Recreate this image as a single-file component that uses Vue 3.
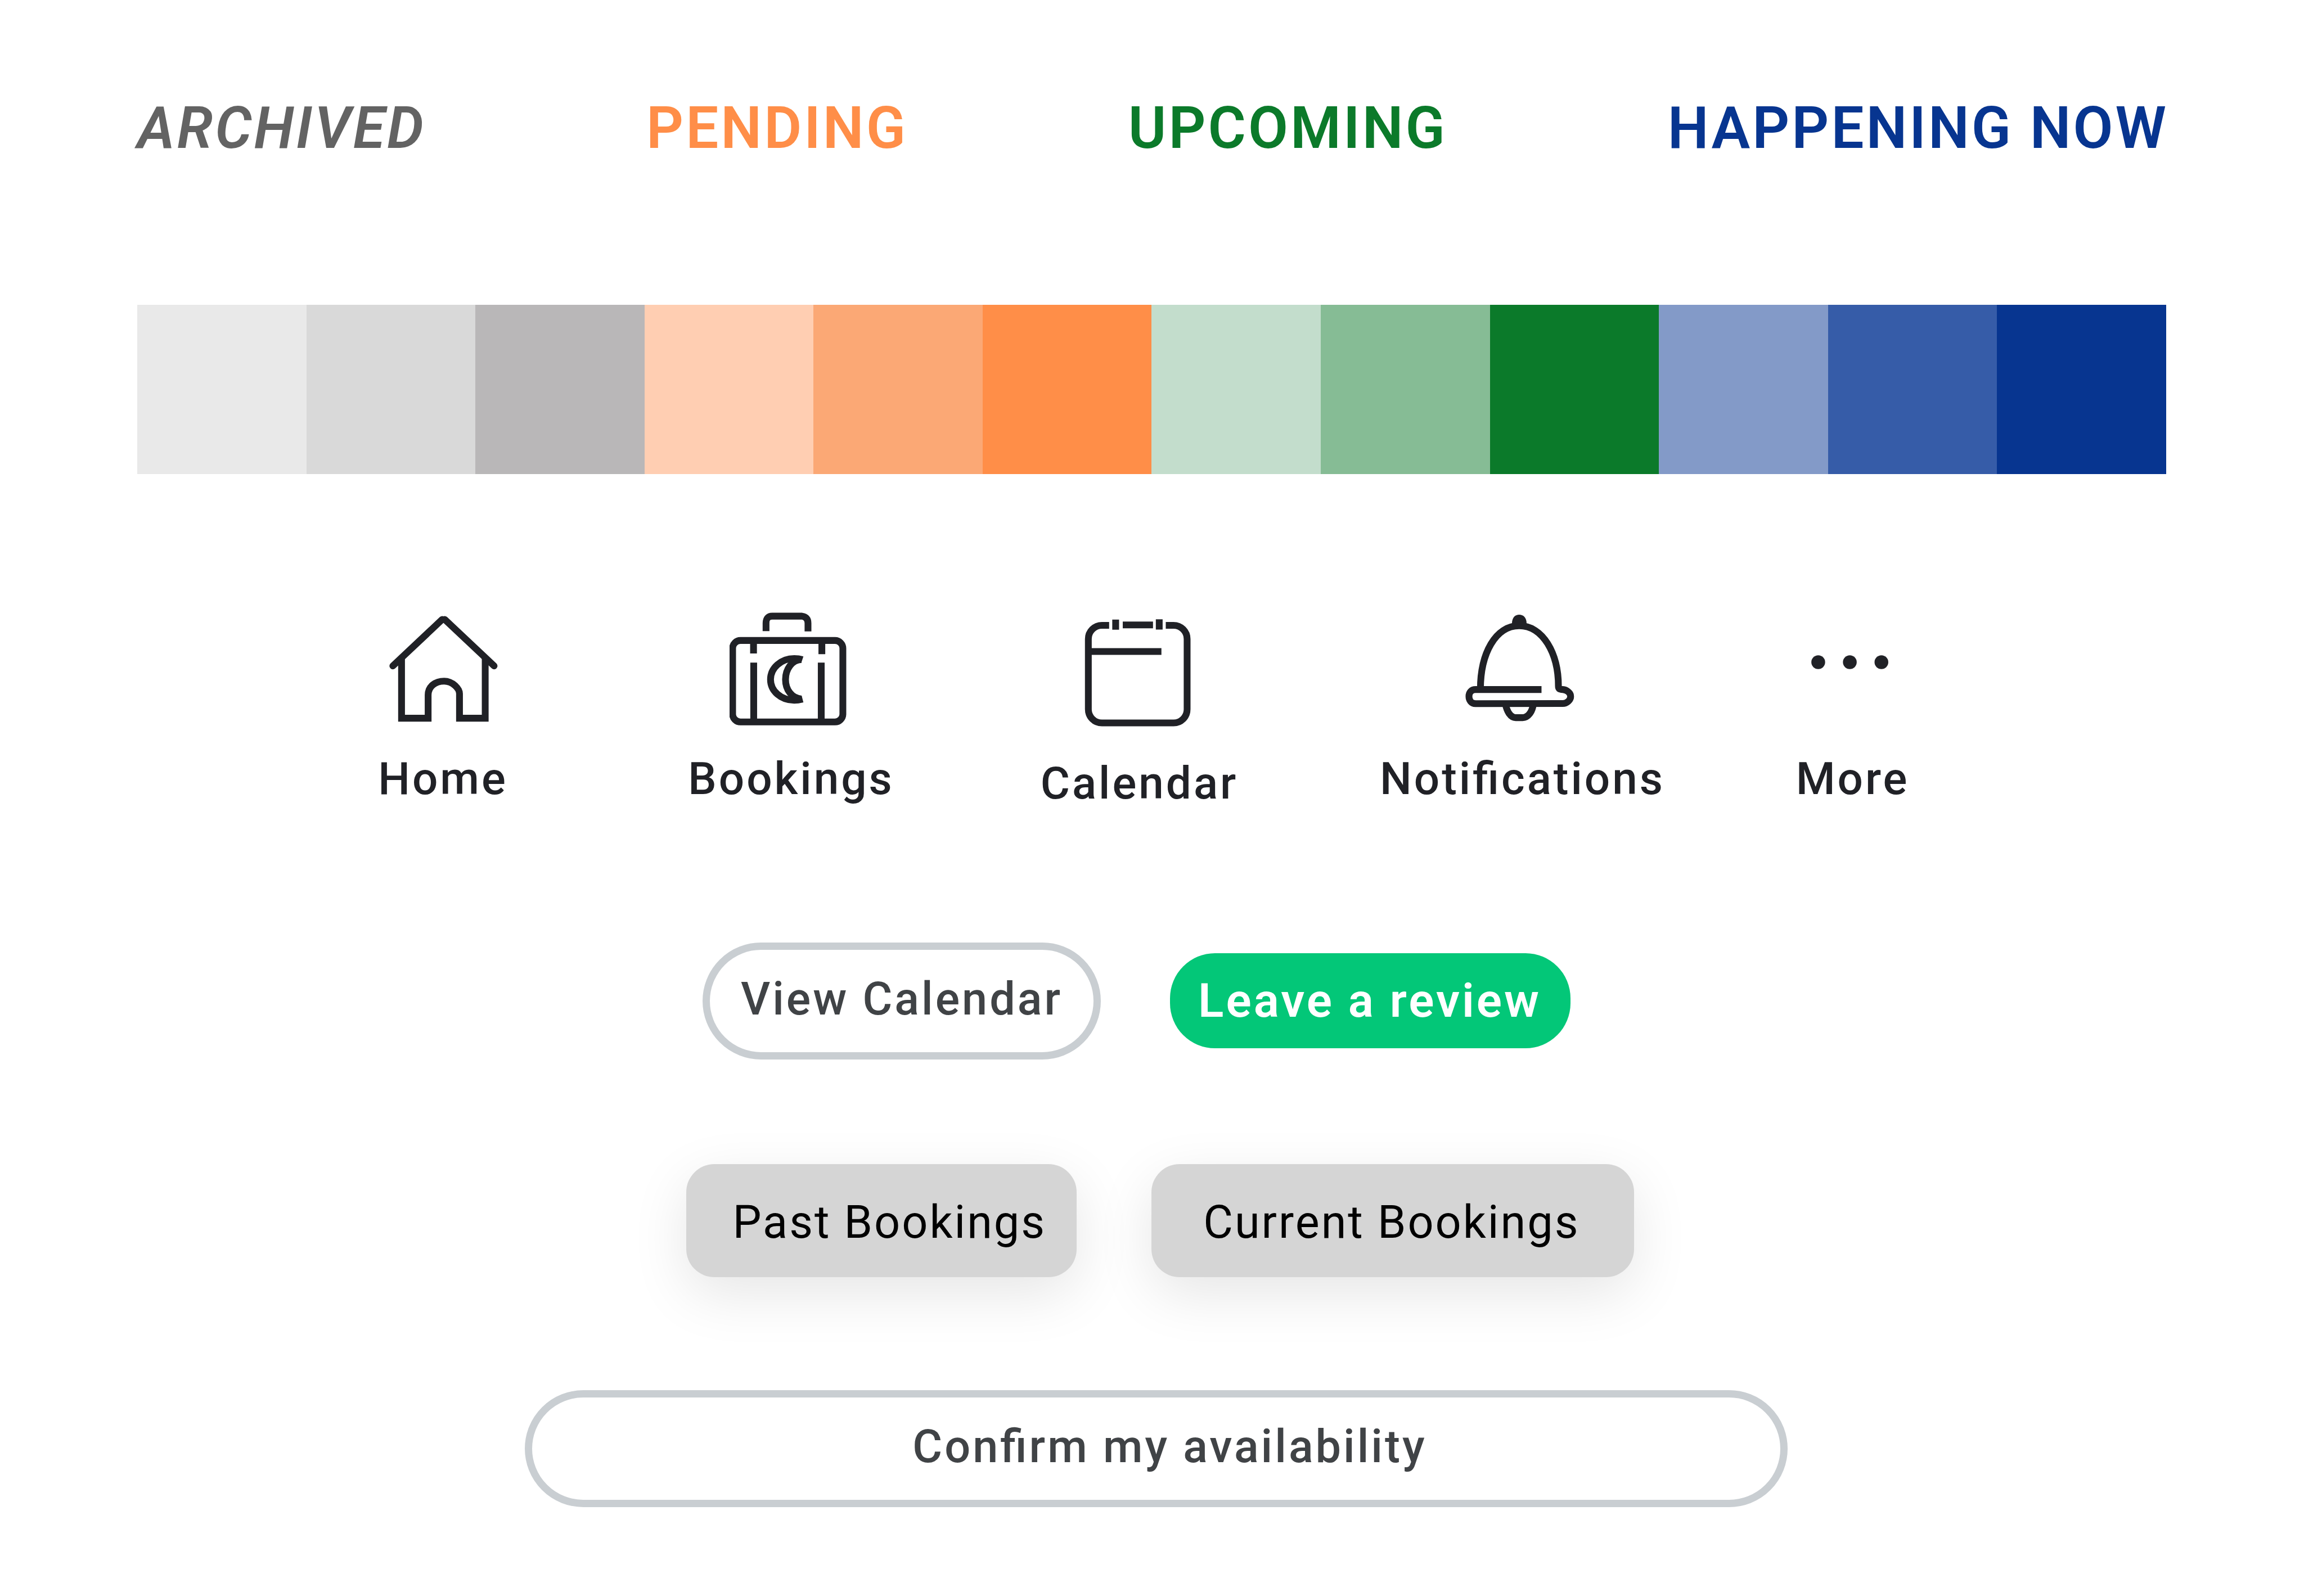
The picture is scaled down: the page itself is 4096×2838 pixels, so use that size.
<script setup>
const statuses = [
  { label: 'Archived', tone: 'archived' },
  { label: 'Pending', tone: 'pending' },
  { label: 'Upcoming', tone: 'upcoming' },
  { label: 'Happening now', tone: 'now' },
]

const swatches = [
  '#e9e9e9', '#d9d9d9', '#b9b7b8',
  '#ffceb2', '#fba875', '#ff8e48',
  '#c3ddcc', '#86bc95', '#0b7a2a',
  '#839ac8', '#365ca8', '#073590',
]
</script>

<template>
  <main class="page">
    <ul class="legend">
      <li v-for="s in statuses" :key="s.tone" :class="['status', s.tone]">{{ s.label }}</li>
    </ul>

    <div class="palette" aria-hidden="true">
      <span v-for="c in swatches" :key="c" class="swatch" :style="{ background: c }"></span>
    </div>

    <nav class="nav">
      <a class="nav-item" href="#home">
        <svg class="icon" viewBox="0 0 284 284" aria-hidden="true">
          <path stroke-linecap="round" d="M26.3 129.3 139.7 22.5M145.3 22.5 258.7 129.3" />
          <path d="M46.3 112V249.3H107.3V196C107.3 176 124 164.2 144 164.2S179.3 182 179.3 193V249.3H238.3V112" />
        </svg>
        <span>Home</span>
      </a>
      <a class="nav-item" href="#bookings">
        <svg class="icon" viewBox="1 0 284 284" aria-hidden="true">
          <rect x="8" y="70.8" width="253" height="187" rx="18" />
          <path d="M84.7 49.4V31Q84.7 15 99 15H167Q181 17 181 31V50" />
          <path d="M56 71V100.7M56.4 121.7V258M212.8 71V102.3M211.4 121.7V258" />
          <path d="M168 115C162 113 156 112.3 149.4 112.3C119 112.3 95 134 95 160.3C95 187 119 208 149.4 208C156 208 162 207 168.5 205.3" />
          <path d="M166 114.5C144 115 129.4 137 129.4 160.3C129.4 184 144 204 166 205.3" />
        </svg>
        <span>Bookings</span>
      </a>
      <a class="nav-item" href="#calendar">
        <svg class="icon icon-tall" viewBox="3 0 284 294" aria-hidden="true">
          <path d="M75 36H58.5A31.2 31.2 0 0 0 27.3 67.2V228.8A31.2 31.2 0 0 0 58.5 260H222.8A31.2 31.2 0 0 0 254 228.8V67.2A31.2 31.2 0 0 0 222.8 36H205" />
          <path d="M90 22.7V46M106.3 35H175.7M190 22.2V45.7M27 96H195" />
        </svg>
        <span>Calendar</span>
      </a>
      <a class="nav-item" href="#notifications">
        <svg class="icon" viewBox="0 0 284 284" aria-hidden="true">
          <path class="solid" d="M117.4 32C117.4 18 125 11.7 134 11.7S151 18 151 32L148 41Q134 47 120 41Z" />
          <path d="M45 183C45 100 80 37 134 37C188 37 224 100 224 176C224 182 227 183.5 234 183.5C243 184 252 191 252 199.5C252 208 243 215.5 234 215.5L34 216C24 215.7 18.7 208 18.7 199C18.7 190 24 183.5 34 183.5H185.2" />
          <path d="M102.5 217C106 234 114 248 126 248H142C154 248 164 235 166.4 217" />
        </svg>
        <span>Notifications</span>
      </a>
      <a class="nav-item" href="#more">
        <svg class="icon" viewBox="0 0 284 284" aria-hidden="true">
          <circle class="solid" cx="62.5" cy="120.7" r="15.8" />
          <circle class="solid" cx="135" cy="120.7" r="15.8" />
          <circle class="solid" cx="207.5" cy="120.7" r="15.8" />
        </svg>
        <span>More</span>
      </a>
    </nav>

    <div class="actions">
      <button type="button" class="btn outline">View Calendar</button>
      <button type="button" class="btn primary">Leave a review</button>
    </div>

    <div class="filters">
      <button type="button" class="btn tab past">Past Bookings</button>
      <button type="button" class="btn tab">Current Bookings</button>
    </div>

    <div class="confirm">
      <button type="button" class="btn outline wide">Confirm my availability</button>
    </div>
  </main>
</template>

<style>
body {
  background: #fff;
}
</style>

<style scoped>
.page {
  box-sizing: border-box;
  padding: 168px 245px 158px 244px;
  font-family: Roboto, "Liberation Sans", sans-serif;
  font-size: 80px;
  font-feature-settings: "liga" 1;
}

.legend {
  display: flex;
  justify-content: space-between;
  margin: 0 -4px 0 0;
  padding: 0;
  list-style: none;
}

.status {
  font-size: 103px;
  line-height: 120px;
  font-weight: 600;
  letter-spacing: 4px;
  text-transform: uppercase;
  white-space: nowrap;
}

.archived {
  color: #636363;
  font-style: italic;
}

.pending {
  color: #ff8e48;
}

.upcoming {
  color: #0b7a2a;
}

.now {
  color: #073590;
}

.palette {
  display: flex;
  margin-top: 254px;
}

.swatch {
  flex: 1;
  aspect-ratio: 1;
}

.nav {
  display: grid;
  grid-template-columns: 619fr 619fr 619fr 743fr 431fr;
  align-items: start;
  margin: 241px 342px 0 234px;
}

.nav-item {
  display: flex;
  flex-direction: column;
  align-items: center;
  gap: 34px;
  color: #202126;
  line-height: 94px;
  font-weight: 500;
  letter-spacing: 4px;
  text-decoration: none;
}

.icon {
  width: 220px;
  height: 220px;
  fill: none;
  stroke: currentColor;
  stroke-width: 15.6;
}

.icon-tall {
  height: 228px;
}

.solid {
  fill: currentColor;
  stroke: none;
}

.actions,
.filters {
  display: flex;
  justify-content: center;
  align-items: center;
}

.actions {
  gap: 123px;
  margin-top: 236px;
  padding-right: 54px;
}

.filters {
  gap: 133px;
  margin-top: 186px;
  padding-left: 30px;
}

.confirm {
  margin: 201px 673px 0 689px;
}

.btn {
  box-sizing: border-box;
  margin: 0;
  border: 0;
  font: inherit;
  font-size: 81px;
  font-feature-settings: inherit;
  line-height: 96px;
  letter-spacing: 4px;
  white-space: nowrap;
  cursor: pointer;
}

.outline {
  height: 208px;
  padding: 0 55px 6px;
  border: 13px solid #c9ced2;
  border-radius: 104px;
  background: #fff;
  color: #404346;
  font-weight: 500;
}

.wide {
  width: 100%;
  padding-left: 103px;
}

.primary {
  height: 169px;
  padding: 0 52px 0 50px;
  border-radius: 80px;
  background: #03c778;
  color: #fff;
  font-size: 84px;
  font-weight: 600;
}

.tab {
  height: 201px;
  padding: 8px 96px 0 92px;
  border-radius: 50px;
  background: #d5d5d5;
  box-shadow: 0 30px 100px rgba(0, 0, 0, 0.1);
  color: #000;
  font-weight: 400;
  letter-spacing: 3px;
}

.past {
  padding-right: 54px;
  padding-left: 82px;
}
</style>
